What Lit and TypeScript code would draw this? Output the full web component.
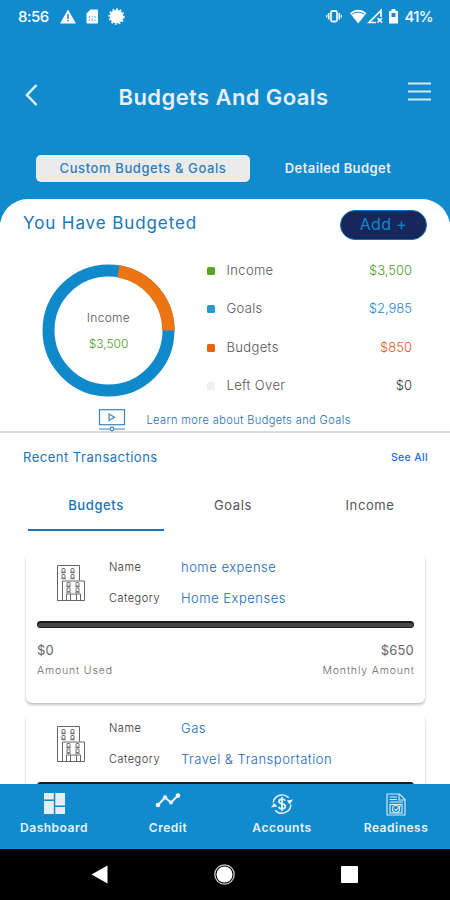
import { LitElement, html, css, svg, nothing } from "lit";
import { customElement } from "lit/decorators.js";

interface LegendRow { label: string; value: string; tone: string; }
interface Budget { name: string; category: string; used?: string; amount?: string; }

const legend: LegendRow[] = [
  { label: "Income", value: "$3,500", tone: "green" },
  { label: "Goals", value: "$2,985", tone: "sky" },
  { label: "Budgets", value: "$850", tone: "orange" },
  { label: "Left Over", value: "$0", tone: "grey" },
];

const budgets: Budget[] = [
  { name: "home expense", category: "Home Expenses", used: "$0", amount: "$650" },
  { name: "Gas", category: "Travel & Transportation" },
];

const windowPair = (x: number, y: number) => svg`
  <rect x=${x} y=${y} width="3" height="3.6" rx="0.8"></rect><path d="M${x - 0.8} ${y + 4.2}h4.6"></path>`;

const building = html`<svg class="building" width="30" height="38" viewBox="0 0 30 38">
  <g fill="none" stroke="#666" stroke-width="1">
    <path d="M6 36.5H1.500V1.500H23.500V16.500M1.500 36.500H28.500M6.500 36.500V17H28.500V36.500M10.500 36.500V30H24.500V36.500M14.500 36.500V30M20.500 36.500V30"></path>
    ${windowPair(6, 4.5)}${windowPair(15, 4.5)}${windowPair(6, 10.5)}${windowPair(15, 10.5)}
    ${windowPair(11, 18.5)}${windowPair(20, 18.5)}${windowPair(11, 24)}${windowPair(20, 24)}
  </g></svg>`;

const navIcons = {
  dashboard: html`<svg width="21" height="21" viewBox="0 0 21 21"><path fill="#e6edf5" d="M0 0h9.800v6.500H0zM0 8h9.800v13H0zM11.300 0H21v12.500h-9.700zM11.300 14H21v7h-9.700z"></path></svg>`,
  credit: html`<svg width="26" height="15" viewBox="0 0 26 15"><g fill="#f2f6fa"><path d="M3 12L10 4.500L16 9.500L23 2.500" fill="none" stroke="#f2f6fa" stroke-width="2"></path><circle cx="3" cy="12" r="2.300"></circle><circle cx="10" cy="4.300" r="2.100"></circle><circle cx="16" cy="9.500" r="2.100"></circle><circle cx="23" cy="2.600" r="2.300"></circle></g></svg>`,
  accounts: html`<svg width="24" height="22" viewBox="0 0 24 22"><g fill="none" stroke="#eaf2fa" stroke-width="1.400"><path d="M3.300 9.500A9 9 0 0 1 18.800 4.800M20.900 11.500A9 9 0 0 1 5.200 17.200"></path><path d="M15.200 7.600C14.400 6.400 13.300 6.100 12 6.100C10.200 6.100 8.900 7 8.900 8.500C8.900 11.800 15.300 10 15.300 13.200C15.300 14.900 13.800 15.800 12 15.800C10.400 15.800 9.200 15.200 8.600 14M12 3.800V18.200" stroke-width="1.700"></path></g><path fill="#eaf2fa" d="M16.800 7.500L23 6.500L19.800 11.500zM1 14.500L4 10L7.500 13.500z"></path></svg>`,
  readiness: html`<svg width="20" height="23" viewBox="0 0 20 23"><g fill="none" stroke="#d5e7f5" stroke-width="1.200"><path d="M1 1H13.500L19 6.500V22H1z"></path><path d="M13 1V7H19M3.500 4H11M3.500 6.500H11M3.500 9H17"></path><rect x="4" y="11.500" width="12" height="8.500"></rect><circle cx="10" cy="16" r="3.500"></circle><path d="M8.300 15.800L10 17.500L14.500 12.500"></path></g></svg>`,
};

@customElement("app-root")
export class AppRoot extends LitElement {
  static styles = css`
    :host { display: flex; flex-direction: column; width: 450px; height: 900px; overflow: hidden; background: #fff; font-family: Inter, "Open Sans", sans-serif; line-height: 20px; color: #777; white-space: nowrap; }
    * { box-sizing: border-box; }
    svg { display: block; flex: none; overflow: visible; }
    .top { flex: none; height: 222px; background: #108bcd; color: #e9eef7; }
    .status { display: flex; align-items: center; height: 32px; padding: 1px 17px 0 18px; color: #fff; font-size: 15px; font-weight: 500; }
    .time { width: 42px; letter-spacing: -0.5px; }
    .space { flex: 1; }
    .pct { letter-spacing: -0.7px; margin-left: 4px; }
    .head { display: flex; align-items: center; justify-content: space-between; height: 122px; padding: 4px 19px 0 24px; }
    .title { font-size: 22px; font-weight: 600; line-height: 30px; letter-spacing: 0.4px; padding-top: 4px; }
    .menu { margin-top: -7px; }
    .back { margin-top: -1px; }
    .modes { display: flex; height: 28px; padding: 0 0 0 36px; align-items: center; }
    .mode { width: 214px; height: 27px; border-radius: 5px; background: #ebebeb; color: #2e7fba; text-align: center; line-height: 26px; font-size: 13px; font-weight: 500; letter-spacing: 0.6px; }
    .detail { width: 176px; text-align: center; line-height: 26px; font-size: 13px; font-weight: 600; letter-spacing: 0.42px; }
    .sheet { flex: none; height: 234px; margin-top: -23px; background: #fff; border-radius: 28px 28px 0 0; border-bottom: 2px solid #d9dcde; }
    .sum { display: flex; align-items: center; justify-content: space-between; height: 51px; padding: 0 23px; color: #1976b9; font-size: 17px; }
    .sum .h { letter-spacing: 0.9px; padding-bottom: 3px; }
    .add { width: 87px; height: 30px; border: 1px solid #0b75b9; border-radius: 15px; background: #17265b; color: #1488cd; font-size: 16px; line-height: 26px; text-align: center; letter-spacing: 0.4px; }
    .chart { display: flex; height: 155px; }
    .ring { display: grid; margin: 13.500px 0 0 42px; width: 133px; height: 133px; }
    .ring > * { grid-area: 1 / 1; }
    .mid { display: flex; flex-direction: column; align-items: center; font-size: 12px; font-weight: 300; padding-top: 44.500px; gap: 6px; color: #555; letter-spacing: 0.3px; }
    .mid b { font-weight: 300; color: #4c9d27; letter-spacing: 0; }
    .legend { width: 206px; margin-left: 31px; display: flex; flex-direction: column; font-size: 13px; font-weight: 300; color: #555; padding-top: 1px; letter-spacing: 0.35px; }
    .row { display: flex; align-items: center; height: 38.3px; }
    .dot { width: 8px; height: 8px; border-radius: 1.500px; margin: 2px 11.500px 0 1px; }
    .row .v { margin-left: auto; letter-spacing: 0; }
    .dot.green { background: #57a41f; } .v.green { color: #4c9d27; }
    .dot.sky { background: #2d97d2; } .v.sky { color: #2586d0; }
    .dot.orange { background: #ea630f; } .v.orange { color: #e8541b; }
    .dot.grey { background: #f0f0f3; } .v.grey { color: #333; }
    .learn { display: flex; align-items: center; height: 26px; padding: 4px 0 0 98px; gap: 20.500px; font-size: 11px; font-weight: 300; color: #196fb9; letter-spacing: 0.41px; }
    .recent { flex: 1; min-height: 0; overflow: hidden; }
    .rh { display: flex; align-items: center; justify-content: space-between; height: 48px; padding: 0 22px 0 23px; color: #1974bd; font-size: 13px; letter-spacing: 0.5px; }
    .all { font-size: 10.5px; font-weight: 500; color: #1d6cdb; letter-spacing: 0.35px; padding-top: 2px; }
    .tabs { display: flex; height: 50px; padding: 0 11px 0 28px; margin-bottom: 22px; font-size: 13px; font-weight: 400; color: #555; letter-spacing: 0.6px; }
    .tab { width: 136px; height: 50px; padding-top: 13.500px; text-align: center; border-bottom: 2px solid transparent; margin-right: 1px; }
    .tab.on { color: #1674b9; border-color: #1376bd; font-weight: 500; }
    .card { width: 399px; height: 150px; margin: 0 0 11px 26px; padding: 0 11px; border-radius: 6px; background: #fff; box-shadow: 0 2px 3px rgba(0,0,0,.23), 0 1px 2px rgba(0,0,0,.06); }
    .info { display: grid; grid-template-columns: 53px 72px 1fr; grid-template-rows: 31px 31px; height: 68px; padding: 0 0 0 19px; font-size: 11px; font-weight: 300; color: #333; }
    .info span { line-height: 28px; letter-spacing: 0.5px; }
    .info .x { color: #1669bd; font-size: 13px; letter-spacing: 0.5px; }
    .building { grid-row: 1 / 3; margin-top: 11px; }
    .bar { height: 7px; border-radius: 4px; background: #484848; border: 1px solid #1c1c1c; border-top-width: 2px; }
    .amts { display: flex; justify-content: space-between; padding-top: 11.500px; font-size: 13px; color: #666; letter-spacing: 0.2px; }
    .amts div:last-child { text-align: right; }
    .amts small { display: block; font-size: 10.5px; font-weight: 300; line-height: 21px; letter-spacing: 0.85px; margin-right: -0.800px; }
    .nav { flex: none; display: flex; height: 65px; background: #108bcd; color: #e9f1fa; font-size: 12px; font-weight: 600; letter-spacing: 0.5px; }
    .item { flex: none; display: flex; flex-direction: column; align-items: center; width: 114px; margin-top: 9px; }
    .nav .item:first-child { margin-left: -3px; }
    .pic { height: 25px; display: flex; align-items: flex-start; justify-content: center; }
    .item span { line-height: 20px; }
    .sys { flex: none; display: flex; justify-content: space-between; align-items: center; height: 51px; padding: 0 92px 0 91px; background: #000; }
  `;

  private item(icon: unknown, label: string) {
    return html`<div class="item"><div class="pic">${icon}</div><span>${label}</span></div>`;
  }

  private card(b: Budget) {
    return html`<div class="card">
      <div class="info">${building}<span>Name</span><span class="x">${b.name}</span><span>Category</span><span class="x">${b.category}</span></div>
      <div class="bar"></div>
      ${b.amount ? html`<div class="amts"><div>${b.used}<small>Amount Used</small></div><div>${b.amount}<small>Monthly Amount</small></div></div>` : nothing}
    </div>`;
  }

  render() {
    return html`
      <div class="top">
        <div class="status">
          <span class="time">8:56</span>
          <svg width="66" height="18" viewBox="0 0 66 18">
            <path fill="#fff" d="M8 1.500L16 15.500H0z"></path><path stroke="#108bcd" stroke-width="1.500" d="M8 6v5M8 12v1.500"></path>
            <path fill="#fff" d="M30.500 1.500H37Q38 1.500 38 2.500V14.500Q38 15.500 37 15.500H27.500Q26.500 15.500 26.500 14.500V5.500z"></path>
            <path fill="none" stroke="#6fb6de" stroke-width="1.200" d="M29.500 8v2M29.500 11.500v1.500M35 8v2M35 11.500v1.500M32.300 8v1M32.300 10.500v2.500"></path>
            <circle cx="56.500" cy="8.500" r="6.800" fill="#fff"></circle><circle cx="56.500" cy="8.500" r="7.400" fill="none" stroke="#fff" stroke-width="1.500" stroke-dasharray="1.900 1.900"></circle>
          </svg>
          <span class="space"></span>
          <svg width="76" height="18" viewBox="0 0 76 18">
            <g fill="none" stroke="#e8f3fa" stroke-width="1.800"><rect x="6" y="3" width="6" height="10.500" rx="1.500"></rect><path d="M3.700 5v6.500M14.300 5v6.500"></path><path stroke-width="1.300" d="M1.600 7v2.500M16.400 7v2.500"></path></g>
            <path fill="#fff" d="M25 5Q33 -1.500 41.500 5L33.200 15.500z"></path><path fill="none" stroke="#108bcd" stroke-width="1" d="M27 6.200Q33 2 39.500 6.200"></path>
            <path fill="none" stroke="#fff" stroke-width="1.700" d="M56 9V2.500L44 14.500H51"></path><path stroke="#fff" stroke-width="1.700" d="M52.500 10l4.500 4.500M57 10l-4.500 4.500"></path>
            <path fill="#fff" d="M66.500 1h4v2h2.500v12.500H64V3h2.500z"></path><path fill="#108bcd" d="M66.500 5h4v4h-4z"></path>
          </svg>
          <span class="pct">41%</span>
        </div>
        <div class="head">
          <svg class="back" width="15" height="22" viewBox="0 0 15 22"><path d="M12.500 1L3 11L12.500 21" fill="none" stroke="#e8f0f8" stroke-width="2.500"></path></svg>
          <div class="title">Budgets And Goals</div>
          <svg class="menu" width="23" height="19" viewBox="0 0 23 19"><path d="M0 1.500h23M0 9.500h23M0 17.500h23" stroke="#d9e9f5" stroke-width="2.200"></path></svg>
        </div>
        <div class="modes"><div class="mode">Custom Budgets &amp; Goals</div><div class="detail">Detailed Budget</div></div>
      </div>
      <div class="sheet">
        <div class="sum"><span class="h">You Have Budgeted</span><div class="add">Add +</div></div>
        <div class="chart">
          <div class="ring">
            <svg width="133" height="133" viewBox="0 0 133 133"><circle cx="66.500" cy="66.500" r="60" fill="none" stroke="#0f89ca" stroke-width="12"></circle><path d="M76.400 7.300A60 60 0 0 1 126.500 66.500" fill="none" stroke="#ed7410" stroke-width="12.400"></path></svg>
            <div class="mid"><span>Income</span><b>$3,500</b></div>
          </div>
          <div class="legend">${legend.map(r => html`<div class="row"><i class="dot ${r.tone}"></i><span>${r.label}</span><span class="v ${r.tone}">${r.value}</span></div>`)}</div>
        </div>
        <div class="learn">
          <svg width="28" height="22" viewBox="0 0 28 22"><g fill="none" stroke="#3f84bd" stroke-width="1.200"><rect x="1.500" y="0.700" width="25" height="15"></rect><path d="M11 5L16.500 8.200L11 11.500zM1 20h11M16 20h11"></path><circle cx="14" cy="20" r="1.800"></circle></g></svg>
          <span>Learn more about Budgets and Goals</span>
        </div>
      </div>
      <div class="recent">
        <div class="rh"><span>Recent Transactions</span><span class="all">See All</span></div>
        <div class="tabs"><div class="tab on">Budgets</div><div class="tab">Goals</div><div class="tab">Income</div></div>
        ${budgets.map(b => this.card(b))}
      </div>
      <div class="nav">
        ${this.item(navIcons.dashboard, "Dashboard")}${this.item(navIcons.credit, "Credit")}${this.item(navIcons.accounts, "Accounts")}${this.item(navIcons.readiness, "Readiness")}
      </div>
      <div class="sys">
        <svg width="17" height="19" viewBox="0 0 17 19"><path fill="#fff" d="M16.500 0.500V18.500L0.500 9.500z"></path></svg>
        <svg width="21" height="21" viewBox="0 0 21 21"><circle cx="10.500" cy="10.500" r="9.700" fill="none" stroke="#ccc" stroke-width="1.300"></circle><circle cx="10.500" cy="10.500" r="8" fill="#fff"></circle></svg>
        <svg width="17" height="17" viewBox="0 0 17 17"><rect width="17" height="17" rx="1" fill="#fff"></rect></svg>
      </div>`;
  }
}
